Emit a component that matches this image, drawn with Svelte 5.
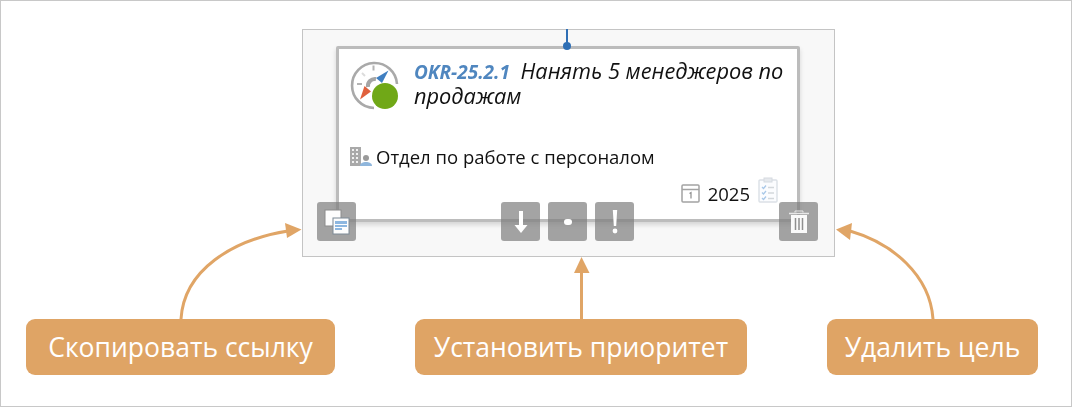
<script>
  const callouts = [
    { label: 'Скопировать ссылку', width: 309 },
    { label: 'Установить приоритет', width: 332 },
    { label: 'Удалить цель', width: 211 }
  ];
</script>

<div class="page">
  <div class="frame">
    <div class="card">
      <div class="card-head">
        <svg class="compass" width="50" height="50" viewBox="0 0 50 50">
          <path d="M25 48 A22.5 22.5 0 1 1 48 24" fill="none" stroke="#a9a9a9" stroke-width="2.6" />
          <path d="M24.5 5.5v5M8 24h5" stroke="#b4b4b4" stroke-width="2" fill="none" />
          <path d="M13 13l3 3" stroke="#dcdcdc" stroke-width="2" />
          <path d="M39.5 10.5 L33 23 L27 18 Z" fill="#3f7fc1" />
          <path d="M11 39.5 L15.5 26 L22 31.5 Z" fill="#e0603c" />
          <path d="M19 27 A7 7 0 0 1 27 19" fill="none" stroke="#a5a5a5" stroke-width="4" />
          <circle cx="36" cy="36" r="13" fill="#70a817" />
        </svg>
        <div class="title">
          <span class="okr">OKR-25.2.1</span>
          Нанять 5 менеджеров по продажам
        </div>
      </div>

      <div class="dept">
        <svg width="24" height="21" viewBox="0 0 24 21">
          <path d="M1 1h11v19H1z" fill="#a9a9a9" />
          <path d="M3 3h2v2H3zM7 3h2v2H7zM3 7h2v2H3zM7 7h2v2H7zM3 11h2v2H3zM7 11h2v2H7zM3 15h2v2H3zM7 15h2v2H7z" fill="#f0f0f0" />
          <circle cx="17" cy="12" r="3" fill="#9a9a9a" />
          <path d="M11 20c0-3 3-4 6-4s6 1 6 4z" fill="#8fb6dc" />
        </svg>
        <span>Отдел по работе с персоналом</span>
      </div>

      <div class="period">
        <svg width="19" height="19" viewBox="0 0 19 19">
          <rect x="1" y="1" width="17" height="17" rx="1" fill="none" stroke="#a3a3a3" stroke-width="1.5" />
          <path d="M1 5.5h17" stroke="#a3a3a3" stroke-width="1.5" />
          <path d="M8.5 9.5l1.5-1v6" fill="none" stroke="#8c8c8c" stroke-width="1.2" />
        </svg>
        <span class="year">2025</span>
        <svg width="20" height="26" viewBox="0 0 20 26">
          <rect x="1" y="3" width="18" height="22" rx="1" fill="#fbfcfe" stroke="#dbe0e6" stroke-width="1.4" />
          <rect x="6" y="1" width="8" height="4" fill="#e6e9ed" stroke="#d5dae0" />
          <path d="M4 10l1.5 1.5L8 8.5M4 15.5l1.5 1.5L8 14M4 21l1.5 1.5L8 19.5" fill="none" stroke="#a9c8e8" stroke-width="1.3" />
          <path d="M10 10.5h6M10 16h6M10 21.5h6" stroke="#d3d7db" stroke-width="1.3" />
        </svg>
      </div>
    </div>

    <span class="link"></span>

    <div class="actions">
      <button class="act" aria-label="Скопировать ссылку">
        <svg width="27" height="27" viewBox="0 0 27 27">
          <rect x="2" y="2" width="16" height="16" fill="#fdfdfd" stroke="#8b8b8b" />
          <rect x="10" y="10" width="16" height="16" fill="#fdfdfd" stroke="#7d8a96" />
          <path d="M12 13h12v3H12zM12 17h12v2H12zM12 20h7v2h-7z" fill="#8db7e0" />
        </svg>
      </button>
      <div class="priority">
        <button class="act" aria-label="Низкий приоритет">
          <svg width="14" height="24" viewBox="0 0 14 24">
            <path d="M5 1h4v14h4.500L7 23 .5 15H5z" fill="#fff" />
          </svg>
        </button>
        <button class="act" aria-label="Обычный приоритет">
          <svg width="8" height="6" viewBox="0 0 8 6"><rect width="8" height="6" rx="3" fill="#fff" /></svg>
        </button>
        <button class="act" aria-label="Высокий приоритет">
          <svg width="6" height="25" viewBox="0 0 6 25">
            <path d="M.8 1h4.400L4.200 17H1.800z" fill="#fff" />
            <circle cx="3" cy="22" r="2.400" fill="#fff" />
          </svg>
        </button>
      </div>
      <button class="act" aria-label="Удалить цель">
        <svg width="20" height="24" viewBox="0 0 20 24">
          <path d="M0 3.500h20" stroke="#e8e8e8" stroke-width="1.500" />
          <path d="M6 2.500V1h8v1.500" fill="none" stroke="#e8e8e8" />
          <rect x="2" y="5" width="16" height="18" fill="#fafafa" />
          <path d="M6.500 8v12M10 8v12M13.500 8v12" stroke="#8f8f8f" stroke-width="1.500" />
        </svg>
      </button>
    </div>
  </div>

  <div class="callouts">
    {#each callouts as c}
      <div class="callout" style="width: {c.width}px">{c.label}</div>
    {/each}
  </div>

  <svg class="arrows" width="1072" height="407" viewBox="0 0 1072 407">
    <g fill="none" stroke="#e0a566" stroke-width="3">
      <path d="M181 319 C184 270 232 240 288 231" />
      <path d="M581.500 319 L581.500 272" />
      <path d="M933 319 C930 275 892 243 850 231" />
    </g>
    <g fill="#e0a566">
      <path d="M301.500 229.500 L285 223 L287 238 Z" />
      <path d="M581.500 257 L574 273 L589.500 273 Z" />
      <path d="M836 229.500 L852 223 L850 240 Z" />
    </g>
  </svg>
</div>

<style>
  :global(body) {
    margin: 0;
    background: #fff;
  }

  .page {
    position: relative;
    box-sizing: border-box;
    width: 1072px;
    height: 407px;
    padding: 28px 0 0 25px;
    border: 1px solid #c8c8c8;
    font-family: "Open Sans", "Noto Sans", sans-serif;
    overflow: hidden;
  }

  .frame {
    position: relative;
    box-sizing: border-box;
    width: 533px;
    height: 228px;
    margin-left: 276px;
    padding: 16px 33px 0;
    background: #f8f8f8;
    border: 1px solid #c4c4c4;
    filter: blur(0.35px);
  }

  .card {
    box-sizing: border-box;
    height: 176px;
    width: 464px;
    padding: 11px 10px 0;
    background: #fff;
    border: 3px solid #bcbcbc;
    border-radius: 2px;
    box-shadow: 0 3px 5px rgba(0, 0, 0, 0.14);
    color: #111;
  }

  .card-head {
    display: flex;
    gap: 15px;
    height: 77px;
  }

  .compass {
    flex: none;
  }

  .title {
    width: 385px;
    font-size: 21.750px;
    font-style: italic;
    line-height: 24px;
    margin-top: -1px;
  }

  .okr {
    font-size: 19px;
    font-weight: 700;
    color: #4f86bf;
    margin-right: 5px;
  }

  .dept {
    display: flex;
    align-items: center;
    gap: 3px;
    font-size: 18.500px;
    height: 24px;
    margin-top: 7px;
  }

  .period {
    display: flex;
    align-items: flex-end;
    justify-content: flex-end;
    gap: 8px;
    margin-top: 9px;
    padding-right: 9px;
    font-size: 18.500px;
  }

  .year {
    line-height: 18px;
  }

  .link {
    position: absolute;
    left: 263px;
    top: -1px;
    width: 2px;
    height: 17px;
    background: #2f6fb5;
  }

  .link::after {
    content: '';
    position: absolute;
    left: -3px;
    bottom: -4px;
    width: 8px;
    height: 8px;
    border-radius: 50%;
    background: #2f6fb5;
  }

  .actions {
    position: absolute;
    left: 14px;
    right: 16px;
    top: 172px;
    display: flex;
    justify-content: space-between;
  }

  .priority {
    display: flex;
    gap: 8px;
  }

  .act {
    display: flex;
    align-items: center;
    justify-content: center;
    width: 39px;
    height: 39px;
    padding: 0;
    border: 0;
    border-radius: 3px;
    background: rgba(125, 125, 125, 0.7);
  }

  .callouts {
    display: flex;
    gap: 80px;
    margin-top: 62px;
  }

  .callout {
    box-sizing: border-box;
    height: 56px;
    flex: none;
    display: flex;
    align-items: center;
    justify-content: center;
    background: #dfa465;
    border-radius: 9px;
    color: #fff;
    font-size: 26.500px;
    white-space: nowrap;
  }

  .arrows {
    position: absolute;
    left: -1px;
    top: -1px;
    pointer-events: none;
  }
</style>
